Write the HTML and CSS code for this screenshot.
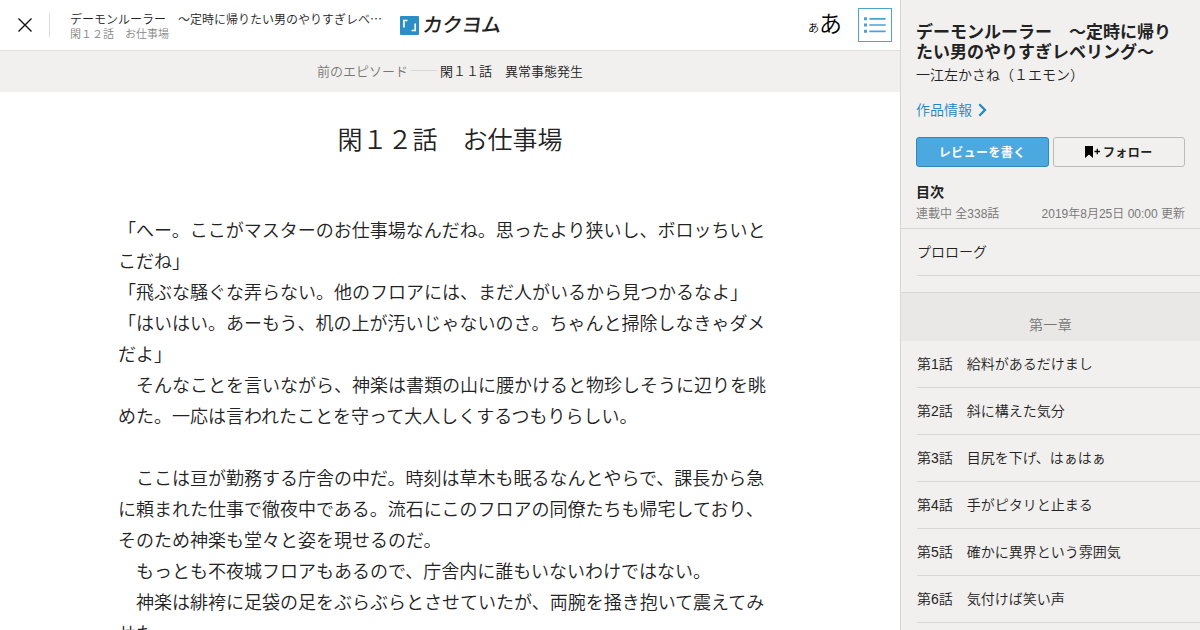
FILE: index.html
```
<!DOCTYPE html>
<html lang="ja">
<head>
    <meta charset="UTF-8">
    <meta name="viewport" content="width=device-width, initial-scale=1.0">
    <title>閑１２話　お仕事場 - カクヨム</title>
    <link rel="stylesheet" href="styles.css">
</head>
<body>
<div class="page">
    <main class="viewer">
        <header class="header">
            <a href="#" class="close-btn" aria-label="close">
                <svg width="14" height="14" viewBox="0 0 14 14"><path d="M.5.5l13 13M13.5.5l-13 13" fill="none" stroke="#111" stroke-width="1.4"/></svg>
            </a>
            <div class="header-title">
                <p class="work-title">デーモンルーラー　～定時に帰りたい男のやりすぎレベ⋯</p>
                <p class="episode-title">閑１２話　お仕事場</p>
            </div>
            <a href="#" class="logo">
                <svg width="19" height="19" viewBox="0 0 19 19">
                    <rect width="19" height="19" rx="1" fill="#2a8fc9"/>
                    <path d="M3.900 11.500V4.500h3.600M15.200 7.500v7h-3.600" fill="none" stroke="#fff" stroke-width="1.700"/>
                </svg>
                <span class="logo-text">カクヨム</span>
            </a>
            <a href="#" class="font-btn"><span class="font-small">あ</span><span class="font-large">あ</span></a>
            <a href="#" class="menu-btn" aria-label="menu">
                <svg width="24" height="18" viewBox="0 0 24 18" fill="#4ba3d3">
                    <path d="M1 1.3h3v3H1zM1 7.5h3v3H1zM1 13.8h3v3H1z"/>
                    <path d="M7 2.8h15M7 9h15M7 15.3h15" stroke="#4ba3d3" stroke-width="1.7" stroke-linecap="round"/>
                </svg>
            </a>
        </header>
        <a href="#" class="prev-episode">
            <span class="prev-label">前のエピソード</span>
            <span class="prev-line"></span>
            <span>閑１１話　異常事態発生</span>
        </a>
        <article class="episode">
            <h1>閑１２話　お仕事場</h1>
            <div class="episode-body">
                <p>「へー。ここがマスターのお仕事場なんだね。思ったより狭いし、ボロッちいとこだね」</p>
                <p>「飛ぶな騒ぐな弄らない。他のフロアには、まだ人がいるから見つかるなよ」</p>
                <p>「はいはい。あーもう、机の上が汚いじゃないのさ。ちゃんと掃除しなきゃダメだよ」</p>
                <p>　そんなことを言いながら、神楽は書類の山に腰かけると物珍しそうに辺りを眺めた。一応は言われたことを守って大人しくするつもりらしい。</p>
                <p><br></p>
                <p>　ここは亘が勤務する庁舎の中だ。時刻は草木も眠るなんとやらで、課長から急に頼まれた仕事で徹夜中である。流石にこのフロアの同僚たちも帰宅しており、そのため神楽も堂々と姿を現せるのだ。</p>
                <p>　もっとも不夜城フロアもあるので、庁舎内に誰もいないわけではない。</p>
                <p>　神楽は緋袴に足袋の足をぶらぶらとさせていたが、両腕を掻き抱いて震えてみせた。</p>
            </div>
        </article>
    </main>

    <aside class="sidebar">
        <div class="work-info">
            <h2>デーモンルーラー　～定時に帰りたい男のやりすぎレベリング～</h2>
            <p class="author">一江左かさね（１エモン）</p>
            <a href="#" class="info-link">作品情報
                <svg width="9" height="14" viewBox="0 0 9 14"><path d="M1.3 1.2L7 7l-5.700 5.800" fill="none" stroke="#2286c0" stroke-width="2.200"/></svg>
            </a>
            <div class="buttons">
                <a href="#" class="btn btn-review"><span>レビューを書く</span></a>
                <a href="#" class="btn btn-follow">
                    <svg width="15" height="12" viewBox="0 0 15 12"><path d="M0 0h8v12L4 8.500 0 12z"/><path d="M9.500 5.500h5.500M12.300 2.700v5.600" stroke="#000" stroke-width="1.300"/></svg>
                    <span>フォロー</span>
                </a>
            </div>
            <h3>目次</h3>
            <div class="toc-meta">
                <span>連載中 全338話</span>
                <span>2019年8月25日 00:00 更新</span>
            </div>
        </div>
        <ol class="toc">
            <li><a href="#">プロローグ</a></li>
            <li class="chapter">第一章</li>
            <li><a href="#">第1話　給料があるだけまし</a></li>
            <li><a href="#">第2話　斜に構えた気分</a></li>
            <li><a href="#">第3話　目尻を下げ、はぁはぁ</a></li>
            <li><a href="#">第4話　手がピタリと止まる</a></li>
            <li><a href="#">第5話　確かに異界という雰囲気</a></li>
            <li><a href="#">第6話　気付けば笑い声</a></li>
        </ol>
    </aside>
</div>
</body>
</html>
```
FILE: styles.css
```
* {
    box-sizing: border-box;
}
body {
    margin: 0;
    font-family: "Liberation Sans", "Noto Sans CJK JP", sans-serif;
    font-weight: 350;
    color: #222;
    background: #fff;
    overflow: hidden;
    text-spacing-trim: space-all;
}
h1, h2, h3, p, ol {
    margin: 0;
    padding: 0;
}
a {
    color: inherit;
    text-decoration: none;
}
.page {
    display: grid;
    grid-template-columns: 900px 300px;
    height: 630px;
    overflow: hidden;
}
/* Header */
.header {
    display: flex;
    align-items: center;
    height: 51px;
    padding-right: 8px;
    border-bottom: 1px solid #e0dfdd;
}
.close-btn {
    display: flex;
    align-items: center;
    justify-content: center;
    width: 50px;
    height: 24px;
    border-right: 1px solid #dddcda;
}
.header-title {
    width: 330px;
    padding-left: 20px;
    padding-top: 1px;
    white-space: nowrap;
}
.work-title {
    font-family: "Noto Sans CJK JP", sans-serif;
    font-size: 12px;
    line-height: 16px;
}
.episode-title {
    font-size: 11px;
    line-height: 14px;
    color: #888;
}
.logo {
    display: flex;
    align-items: center;
    gap: 4px;
    margin-left: 20px;
}
.logo-text {
    font-size: 20px;
    font-weight: 500;
    line-height: 20px;
    letter-spacing: -0.5px;
    transform: skewX(-8deg);
    color: #222;
}
.font-btn {
    display: flex;
    align-items: baseline;
    margin-left: auto;
    margin-right: 16px;
    padding-top: 1px;
    line-height: 30px;
    color: #000;
}
.font-small {
    font-size: 11px;
}
.font-large {
    font-size: 23px;
}
.menu-btn {
    display: flex;
    align-items: center;
    justify-content: center;
    width: 34px;
    height: 34px;
    border: 1px solid #4ba3d3;
}
.prev-episode {
    display: flex;
    align-items: center;
    justify-content: center;
    height: 41px;
    padding-bottom: 3px;
    font-size: 13px;
    background: #f1f0ee;
}
.prev-label {
    color: #777;
}
.prev-line {
    width: 26px;
    margin: 0 3px;
    border-top: 1px solid #d8d7d5;
}
/* Episode */
.episode {
    width: 664px;
    margin: 0 auto;
    padding-top: 28px;
}
.episode h1 {
    font-size: 25px;
    font-weight: 350;
    line-height: 40px;
    text-align: center;
}
.episode-body {
    padding-top: 56px;
    padding-right: 14px;
    font-size: 18px;
    line-height: 31px;
}
/* Sidebar */
.sidebar {
    border-left: 1px solid #d8d7d5;
    background: #f1f0ee;
    overflow: hidden;
}
.work-info {
    height: 229px;
    padding: 23px 15px 0;
    border-bottom: 1px solid #d8d7d5;
}
.work-info h2 {
    font-size: 17px;
    line-height: 20px;
}
.author {
    margin-top: 2px;
    font-size: 14px;
    line-height: 20px;
}
.info-link {
    display: flex;
    align-items: center;
    gap: 6px;
    margin-top: 15px;
    font-size: 14px;
    line-height: 20px;
    color: #2286c0;
}
.buttons {
    display: flex;
    gap: 4px;
    margin-top: 17px;
}
.btn {
    display: flex;
    align-items: center;
    justify-content: center;
    gap: 3px;
    width: 133px;
    height: 30px;
    border: 1px solid #bbb;
    border-radius: 3px;
    font-size: 12px;
    font-weight: bold;
    letter-spacing: 0.4px;
}
.btn span {
    padding-bottom: 2px;
}
.btn-review {
    color: #fff;
    background: #4ba9e0;
    border-color: #2e88bb;
}
.work-info h3 {
    margin-top: 15px;
    font-size: 14px;
    line-height: 20px;
}
.toc-meta {
    display: flex;
    justify-content: space-between;
    margin-top: 2px;
    font-size: 12px;
    line-height: 20px;
    color: #777;
}
.toc {
    list-style: none;
    font-size: 14px;
}
.toc a {
    display: block;
    height: 47px;
    margin-left: 16px;
    line-height: 46px;
    border-bottom: 1px solid #d8d7d5;
}
.chapter {
    height: 49px;
    margin-top: 16px;
    padding-top: 22px;
    border-top: 1px solid #d8d7d5;
    line-height: 20px;
    letter-spacing: 0.3px;
    text-align: center;
    color: #777;
    background: #e9e8e6;
}
```
